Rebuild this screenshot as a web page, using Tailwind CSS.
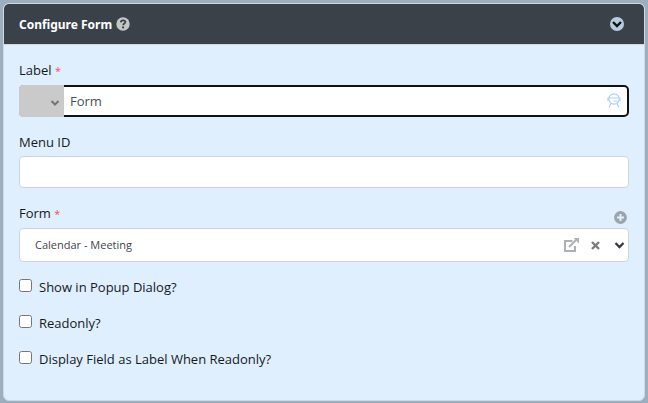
<!DOCTYPE html>
<html lang="en">
<head>
  <meta charset="UTF-8">
  <meta name="viewport" content="width=device-width, initial-scale=1">
  <title>Configure Form</title>
  <script src="https://cdn.jsdelivr.net/npm/@tailwindcss/browser@4"></script>
</head>
<body class="bg-[#9bafc0] p-[3px] font-['Open_Sans','Noto_Sans',sans-serif] text-[13px] leading-5 font-medium text-[#16191c]">
  <div class="bg-[#dfeffe] border border-[#d3d6da] rounded-md overflow-hidden">
    <!-- Header -->
    <div class="flex items-center justify-between h-[41px] pl-[15px] pr-5 bg-[#3a4149] border-b border-[#d3d6da]">
      <div class="flex items-center gap-1">
        <h1 class="pt-px font-['Noto_Sans',sans-serif] text-[12px] font-bold text-white">Configure Form</h1>
        <button type="button" aria-label="Help">
          <svg class="w-[14px] h-[14px]" viewBox="0 0 14 14" fill="none">
            <circle cx="7" cy="7" r="6.7" fill="#c4c6c8"/>
            <path d="M4.7 5.3C4.9 3.9 5.8 3.3 7.1 3.3c1.4 0 2.3.7 2.3 1.8C9.4 6.6 7.2 6.5 7.2 8.2" stroke="#3a4149" stroke-width="1.7"/>
            <circle cx="7.1" cy="10.4" r="1.1" fill="#3a4149"/>
          </svg>
        </button>
      </div>
      <button type="button" aria-label="Collapse">
        <svg class="w-[14px] h-[14px]" viewBox="0 0 14 14" fill="none">
          <circle cx="7" cy="7" r="7" fill="#b8cce0"/>
          <path d="M3 5l4 4 4-4" stroke="#111" stroke-width="2.4"/>
        </svg>
      </button>
    </div>

    <!-- Fields -->
    <form class="px-[15px] pt-[15px] pb-[31px]">
      <div class="mb-[15px]">
        <label for="label" class="block">Label <span class="text-[11px] leading-none text-[#ff4d4d]">*</span></label>
        <div class="relative flex h-8 mt-[5px] bg-white border-2 border-[#111] rounded-[5px]">
          <button type="button" aria-label="Label type" class="flex items-center justify-end w-[45px] -my-[2px] -ml-[2px] pr-1 pt-1 bg-[#cacaca] rounded-l-[4px]">
            <svg class="w-[10px] h-[10px]" viewBox="0 0 10 10" fill="none">
              <path d="M1.5 3L5 6.5 8.5 3" stroke="#747474" stroke-width="2"/>
            </svg>
          </button>
          <input id="label" type="text" value="Form" class="flex-1 min-w-0 pl-[6px] pr-8 outline-none text-[#495057]">
          <svg class="absolute right-[6px] top-[6px] w-[14px] h-[15px]" viewBox="0 0 14 15" fill="none" stroke="#a9d1f9" stroke-width="1.2">
            <circle cx="7" cy="6" r="5.2"/>
            <path d="M1 4.5v3.5M13 4.5v3.5M2 5h10M6.5 8h4"/>
            <path d="M4 10.5L2 14.5M10 10.5l2 4"/>
          </svg>
        </div>
      </div>

      <div class="mb-[15px]">
        <label for="menu-id" class="block">Menu ID</label>
        <input id="menu-id" type="text" class="block w-full h-8 mt-1 px-4 bg-white border border-[#ced4da] rounded">
      </div>

      <div class="mb-[15px]">
        <div class="flex items-start justify-between">
          <label for="form">Form <span class="text-[11px] leading-none text-[#ff4d4d]">*</span></label>
          <button type="button" aria-label="Add form" class="pt-2 pr-[2px]">
            <svg class="w-[13px] h-[13px]" viewBox="0 0 13 13" fill="none">
              <circle cx="6.5" cy="6.5" r="6.4" fill="#9ba4ad"/>
              <path d="M6.5 3v7M3 6.5h7" stroke="#dfeffe" stroke-width="2"/>
            </svg>
          </button>
        </div>
        <div class="relative mt-1">
          <select id="form" class="block w-full h-[34px] pl-[15px] pr-20 appearance-none bg-white border border-[#ced4da] rounded text-[11px] font-medium text-[#3f464d]">
            <option>Calendar - Meeting</option>
          </select>
          <div class="absolute inset-y-0 right-1 flex items-center pointer-events-none">
            <button type="button" aria-label="Open form" class="mr-3">
              <svg class="w-[15px] h-[14px]" viewBox="0 0 15 14" fill="none" stroke="#adb1b5">
                <path d="M8.5 3H1v10h10V8" stroke-width="2"/>
                <path d="M5 9l7-7" stroke-width="2"/>
                <path d="M9.5 0H15v5.5z" fill="#adb1b5" stroke="none"/>
              </svg>
            </button>
            <button type="button" aria-label="Clear" class="mr-[14px]">
              <svg class="w-[9px] h-[9px]" viewBox="0 0 9 9" fill="none">
                <path d="M1 1l7 7M8 1L1 8" stroke="#7d7d7d" stroke-width="2.4"/>
              </svg>
            </button>
            <svg class="w-[11px] h-[10px]" viewBox="0 0 11 10" fill="none">
              <path d="M1.5 3l4 4 4-4" stroke="#343a40" stroke-width="2.3"/>
            </svg>
          </div>
        </div>
      </div>

      <div class="flex flex-col gap-4">
        <div class="flex items-start gap-[7px]">
          <input id="popup" type="checkbox" class="w-[13px] h-[13px] mt-[2px]">
          <label for="popup">Show in Popup Dialog?</label>
        </div>
        <div class="flex items-start gap-[7px]">
          <input id="readonly" type="checkbox" class="w-[13px] h-[13px] mt-[2px]">
          <label for="readonly">Readonly?</label>
        </div>
        <div class="flex items-start gap-[7px]">
          <input id="as-label" type="checkbox" class="w-[13px] h-[13px] mt-[2px]">
          <label for="as-label">Display Field as Label When Readonly?</label>
        </div>
      </div>
    </form>
  </div>
</body>
</html>
